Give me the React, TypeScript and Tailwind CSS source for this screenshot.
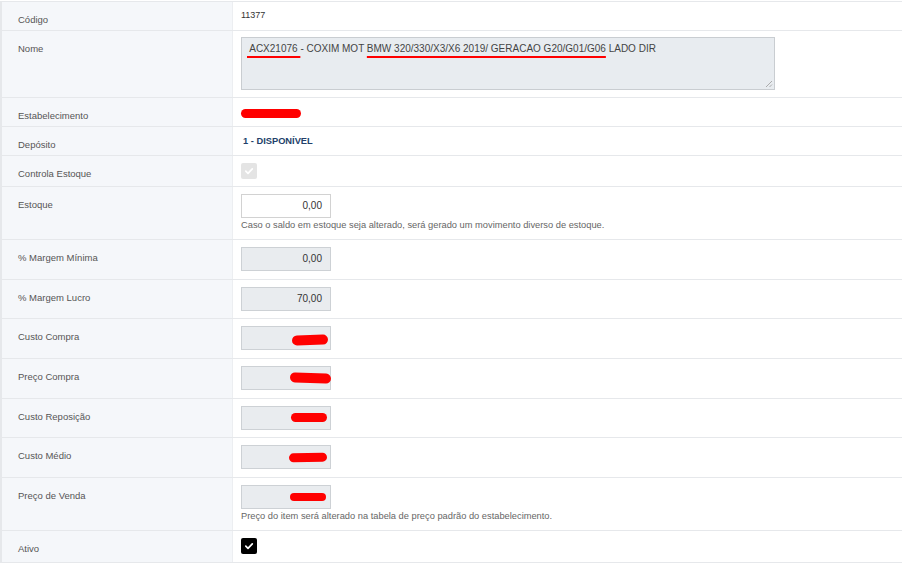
import React from "react";

type FieldRow = {
  label: string;
  height: string;
  content: React.ReactNode;
};

const CheckIcon = () => (
  <svg width="10" height="10" viewBox="0 0 10 10" fill="none">
    <polyline
      points="1.8,5.2 4,7.3 8.3,2.8"
      stroke="#ffffff"
      strokeWidth="1.7"
      strokeLinecap="round"
      strokeLinejoin="round"
    />
  </svg>
);

const Checkbox = ({ disabled }: { disabled?: boolean }) => (
  <div
    className={`flex h-[16px] w-[16px] items-center justify-center rounded-[2px] ${
      disabled ? "bg-[#e4e4e4]" : "bg-black"
    }`}
  >
    <CheckIcon />
  </div>
);

// red scribble used to hide values in the screenshot
const Redacted = ({ className }: { className: string }) => (
  <span className={`absolute rounded-full bg-[#ff0000] ${className}`} />
);

const NumberInput = ({
  value,
  disabled = true,
  redact,
}: {
  value?: string;
  disabled?: boolean;
  redact?: string;
}) => (
  <div
    className={`relative flex h-[24px] w-[90px] items-center justify-end border pr-[8px] text-[10px] leading-[12px] text-[#333] ${
      disabled ? "border-[#cdd1d5] bg-[#e9ecef]" : "border-[#d2d2d2] bg-white"
    }`}
  >
    {value}
    {redact && <Redacted className={redact} />}
  </div>
);

const Help = ({ children }: { children: React.ReactNode }) => (
  <p className="mt-[1px] text-[9.3px] leading-[12px] text-[#666]">{children}</p>
);

const NameBox = () => (
  <div className="relative h-[53px] w-[534px] border border-[#c9cdd1] bg-[#e8ecf0] pl-[5px] pt-[5px] text-[10px] leading-[12px] text-[#444]">
    <span className="whitespace-pre underline decoration-[#ff0000] decoration-2 underline-offset-[4px]">
      {" ACX21076 "}
    </span>
    <span className="whitespace-pre">{"- COXIM MOT "}</span>
    <span className="whitespace-pre underline decoration-[#ff0000] decoration-2 underline-offset-[4px]">
      BMW 320/330/X3/X6 2019/ GERACAO G20/G01/G06
    </span>
    <span className="whitespace-pre">{" LADO DIR"}</span>
    <svg
      className="absolute bottom-[1px] right-[1px]"
      width="8"
      height="8"
      viewBox="0 0 8 8"
    >
      <line x1="7" y1="1" x2="1" y2="7" stroke="#9a9a9a" strokeWidth="0.8" />
      <line x1="7" y1="4.5" x2="4.5" y2="7" stroke="#9a9a9a" strokeWidth="0.8" />
    </svg>
  </div>
);

const rows: FieldRow[] = [
  {
    label: "Código",
    height: "h-[29px]",
    content: (
      <p className="pt-[7px] text-[9px] leading-[12px] text-[#333]">11377</p>
    ),
  },
  { label: "Nome", height: "h-[67px]", content: <div className="pt-[6px]"><NameBox /></div> },
  {
    label: "Estabelecimento",
    height: "h-[29px]",
    content: (
      <div className="pt-[11px]">
        <span className="block h-[9px] w-[60px] rounded-full bg-[#ff0000]" />
      </div>
    ),
  },
  {
    label: "Depósito",
    height: "h-[29px]",
    content: (
      <p className="pl-[2px] pt-[8px] text-[9.3px] font-bold leading-[12px] text-[#233f6a]">
        1 - DISPONÍVEL
      </p>
    ),
  },
  {
    label: "Controla Estoque",
    height: "h-[31px]",
    content: (
      <div className="pt-[7px]">
        <Checkbox disabled />
      </div>
    ),
  },
  {
    label: "Estoque",
    height: "h-[53px]",
    content: (
      <div className="pt-[7px]">
        <NumberInput value="0,00" disabled={false} />
        <Help>
          Caso o saldo em estoque seja alterado, será gerado um movimento diverso de
          estoque.
        </Help>
      </div>
    ),
  },
  {
    label: "% Margem Mínima",
    height: "h-[40px]",
    content: (
      <div className="pt-[7px]">
        <NumberInput value="0,00" />
      </div>
    ),
  },
  {
    label: "% Margem Lucro",
    height: "h-[39px]",
    content: (
      <div className="pt-[7px]">
        <NumberInput value="70,00" />
      </div>
    ),
  },
  {
    label: "Custo Compra",
    height: "h-[40px]",
    content: (
      <div className="pt-[7px]">
        <NumberInput redact="left-[50px] top-[8px] h-[10px] w-[36px] -rotate-2" />
      </div>
    ),
  },
  {
    label: "Preço Compra",
    height: "h-[40px]",
    content: (
      <div className="pt-[7px]">
        <NumberInput redact="left-[48px] top-[6px] h-[10px] w-[41px] rotate-2" />
      </div>
    ),
  },
  {
    label: "Custo Reposição",
    height: "h-[39px]",
    content: (
      <div className="pt-[7px]">
        <NumberInput redact="left-[49px] top-[6px] h-[9px] w-[36px]" />
      </div>
    ),
  },
  {
    label: "Custo Médio",
    height: "h-[40px]",
    content: (
      <div className="pt-[7px]">
        <NumberInput redact="left-[47px] top-[7px] h-[9px] w-[38px] -rotate-1" />
      </div>
    ),
  },
  {
    label: "Preço de Venda",
    height: "h-[53px]",
    content: (
      <div className="pt-[7px]">
        <NumberInput redact="left-[48px] top-[7px] h-[8px] w-[36px]" />
        <Help>Preço do item será alterado na tabela de preço padrão do estabelecimento.</Help>
      </div>
    ),
  },
  {
    label: "Ativo",
    height: "h-[32px]",
    content: (
      <div className="pt-[7px]">
        <Checkbox />
      </div>
    ),
  },
];

export default function App() {
  return (
    <div className="min-h-screen bg-white pt-[1px] font-['Liberation_Sans',Arial,sans-serif]">
      <div className="w-[902px] border-l-2 border-t border-[#e6e8eb]">
        {rows.map((row) => (
          <div
            key={row.label}
            className={`grid grid-cols-[231px_1fr] border-b border-[#e6e8eb] ${row.height}`}
          >
            <div className="border-r border-[#eceef1] bg-[#f5f7fa] pl-[16px] pt-[11px] text-[9.5px] leading-[13px] text-[#555]">
              {row.label}
            </div>
            <div className="pl-[8px]">{row.content}</div>
          </div>
        ))}
      </div>
    </div>
  );
}
